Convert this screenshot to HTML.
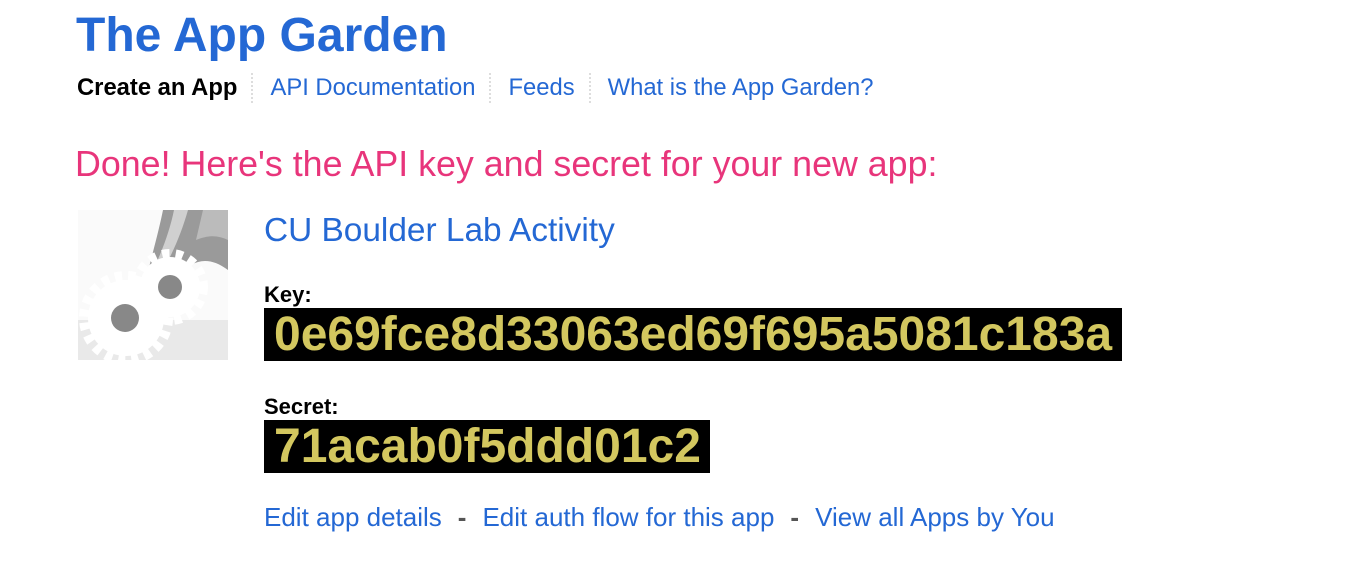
<!DOCTYPE html>
<html><head><meta charset="utf-8"><style>
body{margin:0;background:#fff;font-family:"Liberation Sans",Arial,sans-serif;width:1346px;height:584px;overflow:hidden;position:relative}
.a{position:absolute;white-space:nowrap}
h1{position:absolute;left:76px;top:8px;margin:0;font-size:48px;font-weight:bold;color:#2468d4}
.nav{left:77px;top:73px;font-size:23.8px;color:#2468d4}
.nav span{display:inline-block;padding:0 14px 0 17px;border-left:2px dotted #ddd;line-height:30px}
.nav span:first-child{padding-left:0;border:none;color:#000;font-weight:bold}
.done{left:75px;top:144px;font-size:35.8px;color:#e8357b}
.name{left:264px;top:212px;font-size:33.4px;color:#2468d4}
.lbl{font-size:22px;font-weight:bold;color:#000}
.code{background:#000;color:#d3c75f;font-weight:bold;font-size:48px;line-height:53px;height:53px;padding:0 10px}
.links{left:264px;top:502px;font-size:26px;color:#2468d4}
.links b{color:#555;margin:0 16px}
</style></head><body>
<h1>The App Garden</h1>
<div class="a nav"><span>Create an App</span><span>API Documentation</span><span>Feeds</span><span>What is the App Garden?</span></div>
<div class="a done">Done! Here's the API key and secret for your new app:</div>
<svg class="a" style="left:78px;top:210px" width="150" height="150" viewBox="0 0 150 150">
<rect width="150" height="150" fill="#fafafa"/>
<rect y="110" width="150" height="40" fill="#e9e9e9"/>
<path d="M85 0 L150 0 L150 60 C130 45 115 50 100 65 L60 100 C70 60 80 25 85 0Z" fill="#9a9a9a"/>
<path d="M96 0 L110 0 C100 35 85 65 60 98 L55 95 C75 65 90 30 96 0Z" fill="#d0d0d0"/>
<path d="M125 0 L150 0 L150 30 C140 25 130 25 118 30Z" fill="#bbb"/>
<g fill="#fff"><circle cx="92" cy="77" r="30"/><circle cx="48" cy="108" r="38"/></g>
<g fill="none" stroke="#fff" stroke-width="12" stroke-dasharray="7 6"><circle cx="92" cy="77" r="32"/><circle cx="48" cy="108" r="41"/></g>
<circle cx="92" cy="77" r="12" fill="#888"/>
<circle cx="47" cy="108" r="14" fill="#888"/>
</svg>
<div class="a name">CU Boulder Lab Activity</div>
<div class="a lbl" style="left:264px;top:282px">Key:</div>
<div class="a code" style="left:264px;top:308px;width:838px">0e69fce8d33063ed69f695a5081c183a</div>
<div class="a lbl" style="left:264px;top:394px">Secret:</div>
<div class="a code" style="left:264px;top:420px;width:426px">71acab0f5ddd01c2</div>
<div class="a links">Edit app details<b>-</b>Edit auth flow for this app<b>-</b>View all Apps by You</div>
</body></html>
